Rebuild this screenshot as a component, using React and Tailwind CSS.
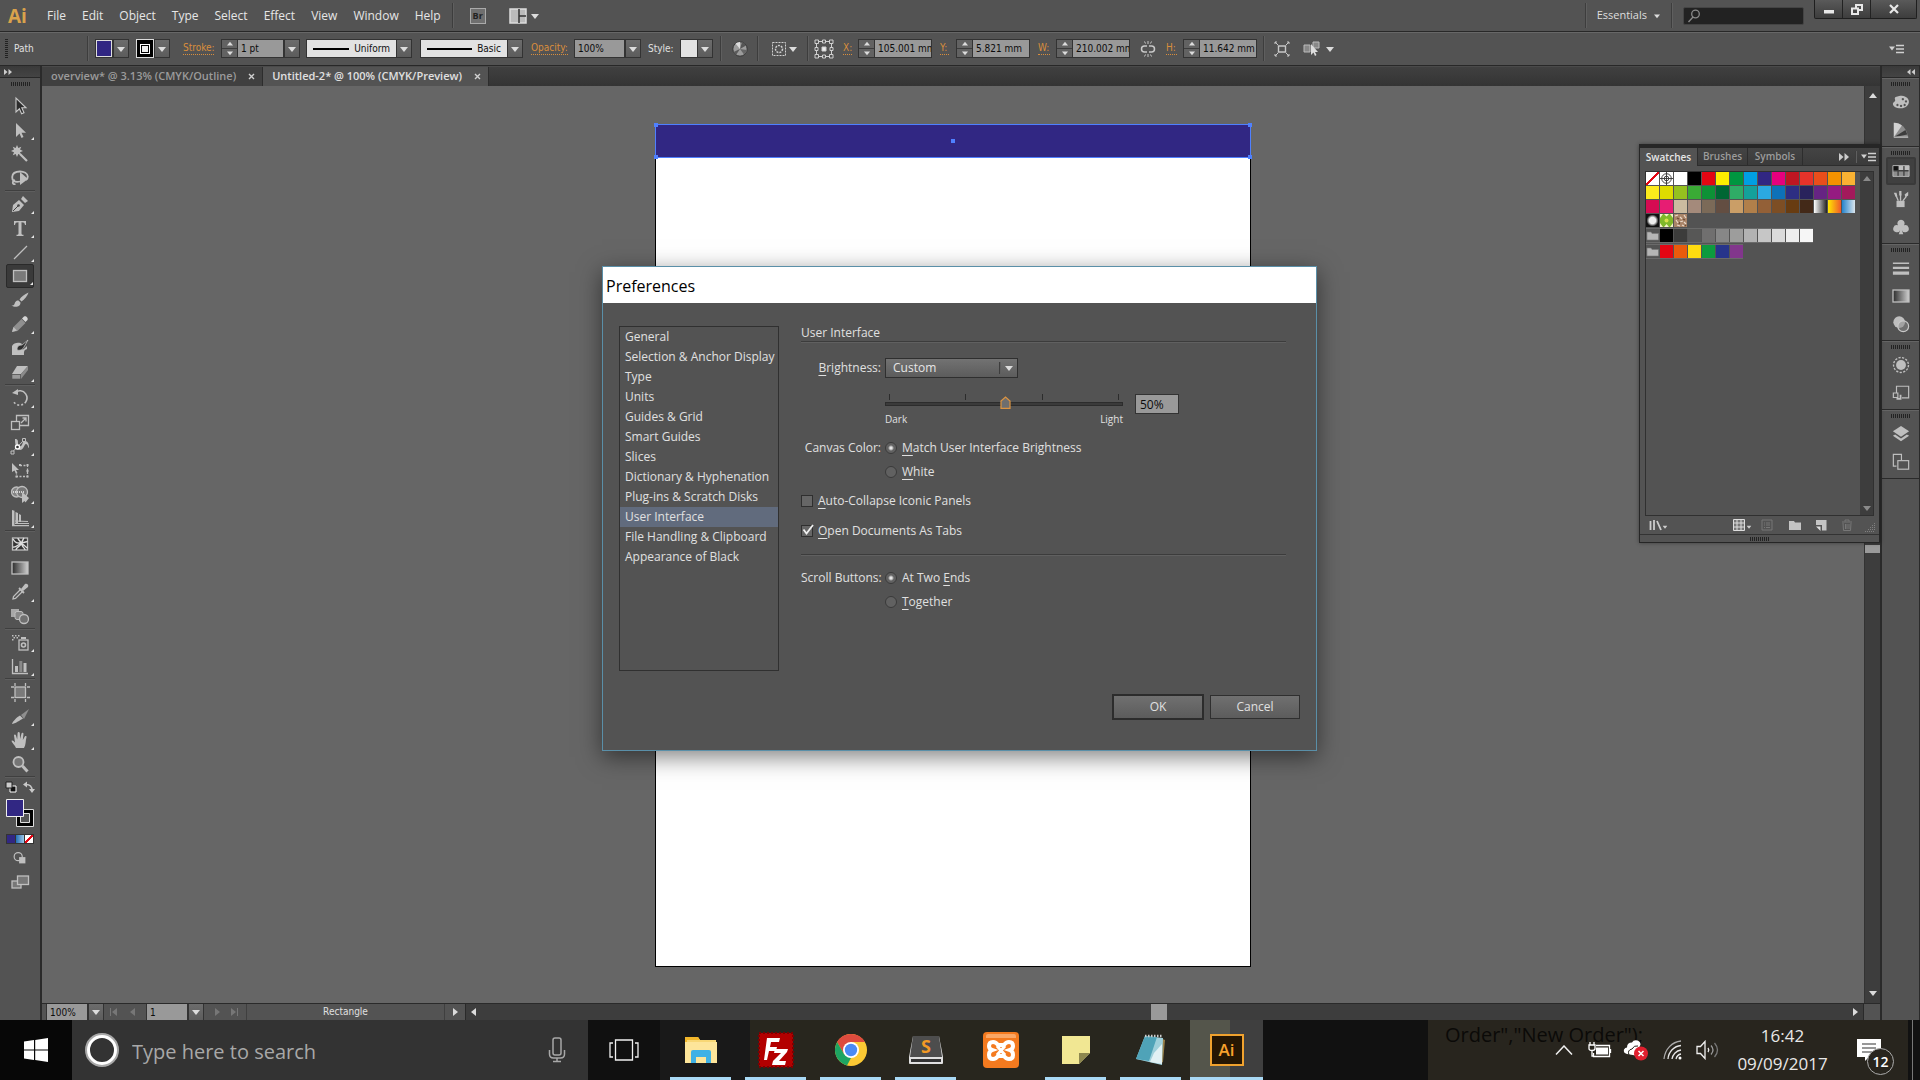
import { useState } from 'react';
import clsx from 'clsx';

const menus = ['File', 'Edit', 'Object', 'Type', 'Select', 'Effect', 'View', 'Window', 'Help'];

const sections = [
    'General', 'Selection & Anchor Display', 'Type', 'Units', 'Guides & Grid', 'Smart Guides', 'Slices',
    'Dictionary & Hyphenation', 'Plug-ins & Scratch Disks', 'User Interface', 'File Handling & Clipboard',
    'Appearance of Black',
];

const swatchRows = [
    ['none', 'registration', '#ffffff', '#000000', '#e30613', '#ffed00', '#009640', '#009fe3', '#312783', '#e6007e', '#be1622', '#e6332a', '#e94e1b', '#f39200', '#f9b233'],
    ['#fcea1c', '#dedc00', '#95c11f', '#3aaa35', '#0d9136', '#006633', '#2fac66', '#14a19a', '#2ba9e1', '#0d71b8', '#2d2e83', '#29235c', '#662483', '#951b81', '#a3195b'],
    ['#d60b52', '#e71d73', '#cbbba0', '#a48a7b', '#7b6a58', '#634e42', '#ca9e67', '#b17f4a', '#936037', '#7d4e24', '#683c11', '#432918',
        'linear-gradient(90deg,#fff,#222)', 'linear-gradient(90deg,#ffe600,#f0582a)', 'linear-gradient(90deg,#2583cc,#dbe6ee)'],
    ['dots', 'leaves', 'sand'],
];

const grays = ['#000000', '#3c3c3b', '#575756', '#706f6f', '#878787', '#9d9d9c', '#b2b2b2', '#c6c6c6', '#dadada', '#ededed', '#f6f6f6'];
const brights = ['#e30613', '#ea5b0c', '#ffdc0f', '#0d9b3e', '#27348b', '#82368c'];

/* ---------- small shared pieces ---------- */

function Arrow({ dir = 'down', className = 'text-[#dcdcdc]' }) {
    const d = { down: 'M0 2h8l-4 5z', up: 'M0 6h8l-4-5z', left: 'M6 0v8l-5-4z', right: 'M2 0v8l5-4z' }[dir];
    return <svg viewBox="0 0 8 8" className={clsx('h-2 w-2 shrink-0', className)}><path d={d} fill="currentColor" /></svg>;
}

function DropButton({ label }) {
    return (
        <button aria-label={label} className="flex h-[19px] w-4 shrink-0 items-center justify-center border border-[#333] bg-linear-to-b from-[#6c6c6c] to-[#5c5c5c]">
            <Arrow />
        </button>
    );
}

function Spinner({ label }) {
    return (
        <span className="flex h-[19px] w-4 shrink-0 flex-col border border-r-0 border-[#333] bg-[#626262]">
            <button aria-label={label + ' up'} className="flex flex-1 items-center justify-center border-b border-[#3c3c3c]"><Arrow dir="up" className="scale-75 text-[#dcdcdc]" /></button>
            <button aria-label={label + ' down'} className="flex flex-1 items-center justify-center"><Arrow className="scale-75 text-[#dcdcdc]" /></button>
        </span>
    );
}

function Field({ label, value, className }) {
    return <input aria-label={label} defaultValue={value} className={clsx('h-[19px] shrink-0 border border-[#333] bg-[#999] pl-[3px] text-[10px] text-[#0c0c0c]', className)} />;
}

function Link({ children, className }) {
    return <a href="#" className={clsx('shrink-0 border-b border-dotted border-[#d98e3c] leading-3 text-[#d98e3c]', className)}>{children}</a>;
}

function Sep({ className, size = 'h-[25px]' }) {
    return <span className={clsx('w-[2px] shrink-0 border-r border-l border-r-[#5f5f5f] border-l-[#3d3d3d]', size, className)} />;
}

function Grip() {
    return <div className="mx-auto h-1 w-[19px] bg-[repeating-linear-gradient(90deg,#222_0_1px,#535353_1px_2px)]" />;
}

/* ---------- icons, all on a 20 x 20 grid ---------- */

function Icon({ children, className = 'h-5 w-5' }) {
    return <svg viewBox="0 0 20 20" fill="none" stroke="#bfbfbf" strokeWidth="1.3" className={clsx('shrink-0', className)}>{children}</svg>;
}

const F = { fill: '#bfbfbf', stroke: 'none' };

const icons = {
    selection: <path d="M6 2v14l3.4-3.2 2.2 5 2.4-1-2.2-5H16z" fill="#2c2c2c" stroke="#c9c9c9" strokeWidth="1.1" />,
    direct: <path d="M6 3v14l3.5-3.4 2 4.4 2-1-2-4.2H16z" {...F} />,
    wand: <><path d="M7 1l1.3 3 3-1.3L10 5.6l3 1.4-3 1.3 1.3 2.9-3-1.2L7 13l-1.3-3-2.9 1.2L4 8.3 1 7l3-1.4-1.2-2.9 2.9 1.3z" {...F} /><path d="M10 10l7 7" strokeWidth="2.2" /></>,
    lasso: <><path d="M10 13.5C4 15 2 12 2.2 9 2.5 5 6 3.500 10 3.500s7.500 2 7.800 5c.1 2-1 3-2 3.500M5 12c-3 1-3 5 .5 4" strokeWidth="1.800" /><path d="M10 4v13l8-6z" {...F} /></>,
    pen: <><path d="M2 18l1-7 6-5 5 5-5 6z" {...F} /><path d="M11 5l2-3 5 5-3 2z" {...F} /><path d="M3 17l5-5" stroke="#444" strokeWidth="1" /><circle cx="8.500" cy="11.500" r="1.300" fill="#444" stroke="none" /></>,
    type: <path d="M4 3h12v4h-1c-.3-2-1-2.7-3.5-2.7v11c0 1.200.5 1.400 2 1.500V18h-7v-1.200c1.500-.1 2-.3 2-1.500v-11C6 4.300 5.300 5 5 7H4z" {...F} />,
    line: <path d="M4 17L17 4" />,
    rect: <rect x="3.500" y="4.500" width="13" height="11" fill="#7a7a7a" />,
    brush: <><path d="M18.500 2.500c-4 1.500-7.500 4.500-9 7l2 2c3-2 6-5.500 7-9z" {...F} /><path d="M8.500 10.500c-3 0-3.500 2-4 3.500-.5 1-1.500 1.500-3 1.500 3 2 9 2 9-3z" {...F} /></>,
    pencil: <><path d="M2 18l1.500-5 8-8 4 4-8 8z" fill="#8f8f8f" stroke="none" /><path d="M2 18l1.500-5 3.500 3.500z" {...F} /><path d="M12 4.500l2-2c2-1 4.500 1.500 3.500 3.500l-2 2z" fill="#d6d6d6" stroke="none" /></>,
    blob: <><path d="M2 8c2-4 8-4 10-2l-3 4c2 2 4 2 6 0l2-2v3c-3 1-3 2-3 6H2z" {...F} /><path d="M18 2l-6 5c-3 0-5 1-5 5 4 1 6-1 7-3z" fill="#2f2f2f" stroke="#bfbfbf" strokeWidth=".8" /></>,
    eraser: <><path d="M7 4h11l-7 8H2z" {...F} /><path d="M2 12.500h8.500V17H2z" fill="#9a9a9a" stroke="#555" strokeWidth=".6" /><path d="M11 12l7-8v4l-7 9z" fill="#8a8a8a" stroke="none" /></>,
    rotate: <><path d="M5 4.500a7.200 7.200 0 1 1-2 8" strokeDasharray="20 0 2 2 2 2 2 2 2 2" strokeWidth="1.600" /><path d="M2 5l6-4v6z" {...F} /></>,
    scale: <><rect x="1.500" y="9.500" width="8" height="8" /><path d="M6.500 9V3.500h12v10h-9" /><path d="M11 11l5-5M12.500 6H16v3.500" /></>,
    width: <><path d="M5 3c3 0 3 2 3 4s1 4 3 3 1-5 4-5c3 0 4 3 4 7-1 0-1-4-3-4s-2 6-6 6c-5 0-5-9-5-11z" {...F} /><path d="M2.500 16L14 4" strokeWidth="1" /><path d="M1 15h3v3H1zM12.500 2.500h3v3h-3z" fill="#535353" strokeWidth="1" /><circle cx="7.500" cy="11" r="2" fill="#333" stroke="#fff" /></>,
    transform: <><path d="M2 3v9l2.500-1.500L6 14l1.500-1-1.500-3H9z" {...F} /><path d="M10 5.500h7.500v11H6.500V14" strokeDasharray="2 1.500" /><path d="M9 4h2v2H9zM16.500 4h2v2h-2zM16.500 15.500h2v2h-2zM5.500 15.500h2v2h-2zM16.500 10h2v2h-2z" {...F} /></>,
    builder: <><circle cx="6.500" cy="8" r="5" fill="#858585" /><circle cx="12" cy="8" r="5.500" fill="#777" /><path d="M3 8h11" stroke="#eee" strokeDasharray="1 1" /><path d="M12 8v11l2.500-2 1 1.500L19 14z" {...F} /></>,
    perspective: <><path d="M2 2l2.500.7V17H2zM5.500 4l2.500 1v10H5.500zM9 6l2 1v7H9z" {...F} /><path d="M5 13l13 .5M5 15.500h14M2 17.600h17" strokeWidth="1.200" /></>,
    mesh: <><rect x="2.500" y="4" width="15" height="12" fill="#333" /><path d="M3 5c3 5 5 4 8 4s5-2 6.500-1M3 13c4 1 5-4 9-3 3 1 3 3 5.500 4M8 4c0 3 4 3 3 6s-5 3-5 6M14 4c-2 3-3 4-2 7s3 3 3 5" stroke="#ddd" strokeWidth="1.400" /></>,
    eyedropper: <><path d="M11 7l4-5c2-1 4 1 3 3l-5 4z" {...F} /><path d="M9 6l5 5" strokeWidth="1.800" /><path d="M10.500 7.500L3.500 14.500 3 17l2.500-.5 7-7" /></>,
    blend: <><rect x="1" y="3" width="8" height="8" fill="#a8a8a8" stroke="none" /><rect x="5" y="5.500" width="8" height="8" rx="2" fill="#888" strokeWidth="1" /><circle cx="14" cy="13" r="4.500" fill="#6f6f6f" /></>,
    spray: <><rect x="9" y="8" width="9" height="10" fill="#555" /><circle cx="13.500" cy="13" r="2" strokeWidth="1.600" /><path d="M11 5h5v2h-5zM2 3h1.500v1.500H2zM5 3h1.500v1.500H5zM8 3h1.500v1.500H8zM3.500 5H5v1.500H3.500zM6.500 5H8v1.500H6.500zM2 7h1.500v1.500H2z" {...F} /></>,
    graph: <><path d="M2.500 3v14.500H18" /><path d="M5 10h3v6H5zM13.500 7h3v9h-3z" {...F} /><path d="M9.300 5h3v11h-3z" fill="#8a8a8a" stroke="none" /></>,
    artboard: <><rect x="5" y="5" width="10.500" height="10.500" fill="#7a7a7a" /><path d="M5 1v3M1 5h3M15.500 1v3M17 5h3M5 17v3M1 15.500h3M15.500 17v3M17 15.500h3" /></>,
    slice: <><path d="M11 9l8-6-5 10z" fill="#8f8f8f" stroke="none" /><path d="M2 18c1-3 5-7 8-8.500l3 3C10 14 5 18 2 18z" {...F} /></>,
    hand: <path d="M6 18c-1-3-4-5-4.500-7 1-1 2 0 3.500 1.500L4 5.500c0-1.500 1.600-1.500 2 0l1.200 4L7.600 3c.2-1.500 2-1.500 2.200 0l.3 6 1.400-5.500c.5-1.300 2-1 2 .3l-.7 6.200 2-3.500c.8-1 2-.4 1.700.8C15.500 10.500 16 15 14 18z" {...F} />,
    zoom: <><circle cx="8.500" cy="8" r="5" fill="#757575" strokeWidth="1.800" /><path d="M12.500 12l5 5.500" strokeWidth="3" /></>,
    screens: <><rect x="2" y="9" width="9" height="7" fill="#777" /><rect x="7.500" y="4" width="11" height="8.500" fill="#777" /></>,
    drawMode: <><circle cx="8" cy="8.500" r="4.500" /><rect x="9" y="9" width="7" height="7" {...F} /></>,
    palette: <path fillRule="evenodd" d="M9 3c5 0 10 2 9.800 7-.3 4-4 7-9 7C4 17 1 15 1 12c0-2 2-2 2.500-3.500C4 7 2 6 4 4.500zM12 5.500a1.300 1.300 0 1 0 .1 0zM15.500 8a1.300 1.300 0 1 0 .1 0zM14 12a1.300 1.300 0 1 0 .1 0zM10 13a1.300 1.300 0 1 0 .1 0zM6 12a1.300 1.300 0 1 0 .1 0z" {...F} />,
    guide: <><path d="M2 18V2c9 0 14 6 16 16z" fill="#8b8b8b" stroke="none" /><path d="M2 18V2c4 0 7 1.500 9 3z" fill="#d2d2d2" stroke="none" /><path d="M2 18l13-8 2 5z" fill="#3c3c3c" stroke="none" /><path d="M2 18h16" /></>,
    grid: <><path d="M1 4h5.500v5H1z" fill="#111" stroke="none" /><path d="M1 10.500h5v5H1zM7.500 10.500h5v5h-5zM14 10.500h5v5h-5z" fill="#8d8d8d" stroke="none" /><path d="M14 4.500h5v4.500h-5zM7.500 4.500h5v4.500h-5z" {...F} /><path d="M1 4h18v12H1z" strokeWidth="1" /></>,
    brushes: <><path d="M5 12h9v7H5z" {...F} /><path d="M7 12L4 5M9.500 12V4M12 12l4-5" strokeWidth="1.500" /><path d="M2 3l3 0 1 4-2 .5zM8 1h2.500v5H8zM14 5l4-3v4l-3 2z" {...F} /></>,
    club: <path d="M10 2a4 4 0 0 1 3.500 6A4 4 0 1 1 11 13.500l1.500 4.500h-5L9 13.500A4 4 0 1 1 6.500 8 4 4 0 0 1 10 2z" {...F} />,
    strokes: <path d="M1 4h18v1.500H1zM1 8.500h18V11H1zM1 14h18v3.500H1z" {...F} />,
    transparency: <><circle cx="8" cy="8" r="6.500" {...F} /><circle cx="12.500" cy="12.500" r="6" fill="#8a8a8a88" stroke="#c9c9c9" /></>,
    appearance: <><circle cx="10" cy="10" r="5.500" {...F} /><circle cx="10" cy="10" r="8.300" strokeDasharray="2.500 1.500" strokeWidth="1.500" /></>,
    styles: <><path d="M5 10V2.500h13.500v13H11" /><path d="M1.500 10h5v5h-5z" /><path d="M5 16.500h4.500V12" strokeWidth="2" /></>,
    layers: <><path d="M10 1l9 6-9 6-9-6z" {...F} /><path d="M3.500 10.500L10 15l6.500-4.500L19 12l-9 6-9-6z" {...F} /></>,
    boards: <><path d="M5 14.500H1.500v-13h9V8" /><rect x="6.500" y="8.500" width="12" height="9.500" /></>,
};

function GradientIcon({ id }) {
    return (
        <Icon>
            <defs><linearGradient id={id}><stop stopColor="#2b2b2b" /><stop offset="1" stopColor="#cfcfcf" /></linearGradient></defs>
            <rect x="2" y="4" width="16" height="12" fill={`url(#${id})`} />
        </Icon>
    );
}

/* ---------- top bars ---------- */

function MenuBar() {
    return (
        <header className="flex h-8 items-start border-b border-[#282828] bg-[#535353]">
            <div className="flex h-[31px] items-center">
                <span className="w-[47px] pl-2 text-[19px] leading-6 font-bold text-[#d9a24c]">Ai</span>
                <nav className="flex gap-4 text-[12px] text-[#e6e6e6]">
                    {menus.map(m => <button key={m}>{m}</button>)}
                </nav>
                <Sep className="ml-[11px]" />
                <button className="ml-4 flex h-4 w-4 items-center justify-center border border-[#aaa] bg-[#6f6f6f] text-[9px] font-bold text-[#222]">Br</button>
                <button aria-label="Arrange documents" className="ml-[23px] flex items-center gap-1">
                    <svg viewBox="0 0 18 16" className="h-4 w-[18px]"><path d="M1 1h16v14H1z" fill="#bbb" stroke="#ddd" strokeWidth="1.500" /><path d="M10 1v14M10 8h7" stroke="#333" strokeWidth="1.500" /></svg>
                    <Arrow />
                </button>
            </div>
            <div className="ml-auto flex h-[31px] items-center">
                <Sep />
                <button className="ml-[10px] flex items-center gap-1.5 text-[11px] text-[#dedede]">Essentials <Arrow className="scale-75 text-[#dcdcdc]" /></button>
                <Sep className="mx-[10px]" />
                <label className="flex h-[18px] w-[121px] items-center rounded-xs border border-[#444] bg-[#222] px-[3px]">
                    <svg viewBox="0 0 14 14" className="h-3.5 w-3.5 shrink-0" fill="none" stroke="#8a8a8a" strokeWidth="1.300"><circle cx="8.500" cy="5" r="3.800" /><path d="M6 8l-4.500 5" /></svg>
                    <input aria-label="Search for help" className="w-full min-w-0 bg-transparent text-[11px] text-white outline-none" />
                </label>
            </div>
            <div className="mr-[3px] ml-[10px] flex h-[19px] overflow-hidden rounded-b-xs border border-t-0 border-[#1f1f1f] bg-linear-to-b from-[#5a5a5a] to-[#3d3d3d]">
                <button aria-label="Minimize" className="flex w-7 items-center justify-center border-r border-[#222]"><svg viewBox="0 0 10 10" className="h-2.5 w-2.5"><path d="M0 6h10v3.500H0z" fill="#e8e8e8" /></svg></button>
                <button aria-label="Restore" className="flex w-7 items-center justify-center border-r border-[#222]"><svg viewBox="0 0 12 12" className="h-3 w-3" fill="none" stroke="#e8e8e8" strokeWidth="2"><path d="M5 5V2h6v5H8" /><path d="M1 5.500h6V11H1z" /></svg></button>
                <button aria-label="Close" className="flex w-[45px] items-center justify-center"><svg viewBox="0 0 10 10" className="h-2.5 w-2.5"><path d="M1 1l8 8M9 1L1 9" stroke="#e8e8e8" strokeWidth="2.200" /></svg></button>
            </div>
        </header>
    );
}

function LineField({ name, className }) {
    return (
        <>
            <button className={clsx('flex h-[19px] shrink-0 items-center gap-[5px] border border-r-0 border-[#333] bg-[#e2e2e2] px-1.5 text-[10px] text-[#111]', className)}>
                <span className="h-0.5 flex-1 bg-black" />
                {name}
            </button>
            <DropButton label={name} />
        </>
    );
}

function ControlBar() {
    return (
        <div className="flex h-[34px] items-center border-t border-b border-t-[#676767] border-b-[#282828] bg-[#535353] pb-px font-['DejaVu_Sans_Condensed','Open_Sans',sans-serif] text-[10px] text-[#e0e0e0]">
            <div className="ml-[5px] h-[19px] w-[3px] bg-[repeating-linear-gradient(180deg,#222_0_1px,#535353_1px_2px)]" />
            <span className="ml-1.5 w-[73px]">Path</span>
            <Sep />
            <button aria-label="Fill" className="ml-[6px] h-[19px] w-[18px] border border-[#333] bg-[#312783] ring-1 ring-[#ddd] ring-inset" />
            <DropButton label="Fill options" />
            <button aria-label="Stroke color" className="ml-[7px] flex h-[19px] w-[18px] items-center justify-center border border-[#ddd] bg-black"><span className="flex h-2.5 w-2.5 border border-white p-px"><span className="flex-1 bg-[#eee]" /></span></button>
            <DropButton label="Stroke options" />
            <Link className="mr-[7px] ml-[13px] w-[31px] whitespace-nowrap">Stroke:</Link>
            <Spinner label="Stroke weight" />
            <Field label="Stroke weight" value="1 pt" className="w-[47px]" />
            <DropButton label="Stroke weight presets" />
            <span className="w-[6px] shrink-0" />
            <LineField name="Uniform" className="w-[90px]" />
            <span className="w-2 shrink-0" />
            <LineField name="Basic" className="w-[87px]" />
            <Link className="mr-[6px] ml-2 w-[37px] whitespace-nowrap">Opacity:</Link>
            <Field label="Opacity" value="100%" className="w-[51px]" />
            <DropButton label="Opacity presets" />
            <span className="ml-[7px] w-8 whitespace-nowrap">Style:</span>
            <span className="h-[19px] w-[17px] border border-r-0 border-[#333] bg-[#e2e2e2]" />
            <DropButton label="Graphic styles" />
            <Sep className="ml-[7px]" />
            <button aria-label="Recolor artwork" className="ml-[10px]">
                <svg viewBox="0 0 16 16" className="h-4 w-4"><circle cx="8" cy="8" r="7.200" fill="#9c9c9c" stroke="#383838" /><path d="M8 8L3.500 2.500A7 7 0 0 1 8 1z" fill="#ddd" /><path d="M8 8l2-7a7 7 0 0 1 4 3.500z" fill="#555" /><path d="M8 8l7 1a7 7 0 0 1-3 4.500z" fill="#666" /><path d="M8 8l-4 6a7 7 0 0 1-2.500-3z" fill="#5a5a5a" /></svg>
            </button>
            <Sep className="ml-[9px]" />
            <button aria-label="Align" className="ml-3 flex items-center gap-0.5">
                <svg viewBox="0 0 16 16" className="h-4 w-4" fill="none" stroke="#d0d0d0"><path d="M1.500 1.500h13v13h-13z" strokeDasharray="2 1" /><circle cx="8" cy="8" r="3.500" strokeDasharray="2 1" strokeWidth="1.500" /></svg>
                <Arrow />
            </button>
            <Sep className="ml-[10px]" />
            <svg viewBox="0 0 20 20" className="ml-[5px] h-5 w-5 shrink-0" fill="none" stroke="#cfcfcf"><path d="M2.500 2.500h15v15h-15z" /><path d="M1 1h3.500v3.500H1zM8.500 1h3v3h-3zM15.500 1H19v3.500h-3.500zM1 8.500h3v3H1zM16 8.500h3v3h-3zM1 15.500h3.500V19H1zM8.500 16h3v3h-3zM15.500 15.500H19V19h-3.500z" fill="#535353" /><path d="M8 8h4v4H8z" fill="#eee" /></svg>
            <Link className="mr-[6px] ml-[9px] w-[9px]">X:</Link>
            <Spinner label="X" />
            <Field label="X" value="105.001 mm" className="w-[58px]" />
            <Link className="mr-[7px] ml-[8px] w-[9px]">Y:</Link>
            <Spinner label="Y" />
            <Field label="Y" value="5.821 mm" className="w-[58px]" />
            <Link className="mr-[6px] ml-[8px] w-[12px] whitespace-nowrap">W:</Link>
            <Spinner label="W" />
            <Field label="W" value="210.002 mm" className="w-[58px]" />
            <button aria-label="Constrain proportions" className="mx-[10px]">
                <svg viewBox="0 0 16 18" className="h-[18px] w-4" fill="none" stroke="#c8c8c8" strokeWidth="1.500"><path d="M7 6H4.500a3 3 0 0 0 0 6H7M9 6h2.500a3 3 0 0 1 0 6H9" /><path d="M8 1v3M4.500 1.500l1 2M11.500 1.500l-1 2M8 14v3M4.500 16.500l1-2M11.500 16.500l-1-2" strokeWidth="1" /></svg>
            </button>
            <Link className="mr-[6px] w-[11px]">H:</Link>
            <Spinner label="H" />
            <Field label="H" value="11.642 mm" className="w-[58px]" />
            <Sep className="ml-[6px]" />
            <button aria-label="Isolate" className="ml-[9px]">
                <svg viewBox="0 0 16 16" className="h-4 w-4" fill="none" stroke="#c8c8c8"><path d="M4.500 5h7v6h-7z" strokeWidth="1.400" /><path d="M1 1l3 3M15 1l-3 3M1 15l3-3M15 15l-3-3M1 3V1h2M13 1h2v2M1 13v2h2M13 15h2v-2" /></svg>
            </button>
            <button aria-label="Select similar" className="ml-[13px] flex items-center gap-[5px]">
                <svg viewBox="0 0 18 16" className="h-4 w-[18px]"><path d="M1 4h6v7H1zM10 1h6v6h-6z" fill="#888" stroke="#bbb" /><path d="M8 3v11l2.500-2.500L12 15l1.500-1-1.500-3h3z" fill="#ddd" /></svg>
                <Arrow />
            </button>
            <button aria-label="Control panel menu" className="mr-4 ml-auto"><PanelMenuIcon /></button>
        </div>
    );
}

function PanelMenuIcon() {
    return <svg viewBox="0 0 15 10" className="h-2.5 w-[15px]"><path d="M0 2.500h6l-3 4z" fill="#d0d0d0" /><path d="M7 1.500h8M7 5h8M7 8.500h8" stroke="#d0d0d0" strokeWidth="1.300" /></svg>;
}

/* ---------- left tool bar ---------- */

const toolGroups = [
    [['selection'], ['direct', 1], ['wand'], ['lasso']],
    [['pen', 1], ['type', 1], ['line', 1], ['rect', 1], ['brush'], ['pencil', 1], ['blob'], ['eraser', 1]],
    [['rotate', 1], ['scale', 1], ['width', 1], ['transform'], ['builder', 1], ['perspective', 1]],
    [['mesh'], ['gradient'], ['eyedropper', 1], ['blend']],
    [['spray', 1], ['graph', 1]],
    [['artboard'], ['slice', 1], ['hand', 1], ['zoom']],
];

function DockHeader({ flip }) {
    return (
        <div className={clsx('flex h-3 items-center border-b border-[#282828] bg-linear-to-b from-[#3a3a3a] to-[#444] px-1', flip && 'justify-end')}>
            <svg viewBox="0 0 8 6" className={clsx('h-1.5 w-2', flip && 'rotate-180')}><path d="M0 0l3.500 3L0 6zM4.500 0L8 3 4.500 6z" fill="#ccc" /></svg>
        </div>
    );
}

function ToolBar() {
    const [active, setActive] = useState('rect');
    return (
        <aside className="w-[42px] shrink-0 border-r-2 border-[#2a2a2a] bg-[#535353]">
            <DockHeader />
            <div className="h-4 pt-1"><Grip /></div>
            {toolGroups.map((group, i) => (
                <div key={i}>
                    {group.map(([name, more]) => (
                        <button
                            key={name}
                            aria-label={name}
                            onClick={() => setActive(name)}
                            className={clsx('relative mx-auto flex h-6 w-7 items-center justify-center', active === name && 'rounded-xs border border-[#2a2a2a] bg-[#3a3a3a]')}>
                            {name === 'gradient' ? <GradientIcon id="tool-gradient" /> : <Icon>{icons[name]}</Icon>}
                            {more && <svg viewBox="0 0 3 3" className="absolute right-0 bottom-0.5 h-[3px] w-[3px]"><path d="M3 0v3H0z" fill="#e6e6e6" /></svg>}
                        </button>
                    ))}
                    <div className="mx-[5px] h-0.5 border-t border-b border-t-[#3f3f3f] border-b-[#5e5e5e]" />
                </div>
            ))}
            <div className="flex h-[18px] items-center justify-between px-[5px]">
                <button aria-label="Default fill and stroke"><svg viewBox="0 0 12 12" className="h-3 w-3"><path d="M5 5h6v6H5z" stroke="#fff" strokeWidth="1" fill="#111" /><path d="M1 1h6v6H1z" fill="#ccc" stroke="#222" strokeWidth="1" /></svg></button>
                <button aria-label="Swap fill and stroke"><svg viewBox="0 0 12 12" className="h-3 w-3" fill="none" stroke="#c8c8c8" strokeWidth="1.500"><path d="M3 3.500c4 0 6 1.500 6 6" /><path d="M0 3.500L4 .5v6zM6 8h6L9 12z" fill="#c8c8c8" stroke="none" /></svg></button>
            </div>
            <button aria-label="Fill and stroke" className="mx-auto mt-0.5 block h-[30px] w-7">
                <svg viewBox="0 0 28 30" className="h-[30px] w-7"><path d="M10.500 11.500h17v17h-17z" fill="#000" stroke="#ddd" /><path d="M14.500 15.500h9v9h-9z" fill="#535353" stroke="#ddd" /><path d="M.5 1.500h17v17H.5z" fill="#312783" stroke="#eee" /></svg>
            </button>
            <div className="mx-auto mt-1.5 flex h-[10px] w-7 gap-px border border-[#333] bg-[#333]">
                <button aria-label="Color" className="flex-1 bg-[#312783]" />
                <button aria-label="Gradient" className="flex-1 bg-linear-to-r from-[#1f6fb5] to-[#9cc8e8]" />
                <button aria-label="None" className="flex-1 bg-[linear-gradient(135deg,#fff_40%,#e30613_40%_60%,#fff_60%)]" />
            </div>
            <button aria-label="Drawing mode" className="mx-auto mt-0.5 flex h-6 w-7 items-center justify-center"><Icon className="h-[18px] w-[18px]">{icons.drawMode}</Icon></button>
            <button aria-label="Screen mode" className="mx-auto flex h-6 w-7 items-center justify-center"><Icon>{icons.screens}</Icon></button>
        </aside>
    );
}

/* ---------- right icon dock ---------- */

const dockGroups = [['palette', 'guide'], ['grid', 'brushes', 'club'], ['strokes', 'gradient', 'transparency'], ['appearance', 'styles'], ['layers', 'boards']];

function Dock() {
    return (
        <aside className="w-10 shrink-0 border-r border-l-2 border-[#2a2a2a] bg-[#535353]">
            <DockHeader flip />
            {dockGroups.map((group, i) => (
                <div key={i} className="border-t border-b border-t-[#646464] border-b-[#2a2a2a] pt-[3px] pb-0.5">
                    <Grip />
                    <div className="mt-0.5">
                        {group.map(name => (
                            <button key={name} aria-label={name} className={clsx('mx-auto flex h-7 w-[30px] items-center justify-center', name === 'grid' && 'rounded-xs border-2 border-[#3a3a3a] bg-[#404040]')}>
                                {name === 'gradient' ? <GradientIcon id="dock-gradient" /> : <Icon className="h-[18px] w-[18px]">{icons[name]}</Icon>}
                            </button>
                        ))}
                    </div>
                </div>
            ))}
        </aside>
    );
}

/* ---------- document area ---------- */

function DocTab({ title, active }) {
    return (
        <div className={clsx('flex items-center border-r border-[#2d2d2d] pr-[7px] pl-[9px]', active ? 'bg-[#535353] text-[#e0e0e0]' : 'bg-[#404040] text-[#9b9b9b]')}>
            <button className="pr-3 text-[11px] font-semibold whitespace-nowrap">{title}</button>
            <button aria-label={'Close ' + title}><svg viewBox="0 0 7 7" className="h-[7px] w-[7px]"><path d="M1 1l5 5M6 1L1 6" stroke="#d0d0d0" strokeWidth="1.400" /></svg></button>
        </div>
    );
}

function Handle({ className }) {
    return <span className={clsx('absolute h-1 w-1 bg-[#4f80ff]', className)} />;
}

function StatusBar() {
    return (
        <div className="flex h-[17px] border-t border-[#2a2a2a] bg-[#535353] font-['DejaVu_Sans_Condensed','Open_Sans',sans-serif] text-[10px] text-[#e0e0e0]">
            <div className="flex h-4 w-[423px] shrink-0 items-center overflow-hidden pl-1">
                <Field label="Zoom" value="100%" className="w-[42px]" />
                <DropButton label="Zoom presets" />
                <button aria-label="First artboard" className="ml-[6px] flex"><span className="h-2 w-px bg-[#777]" /><Arrow dir="left" className="text-[#777]" /></button>
                <button aria-label="Previous artboard" className="mr-[9px] ml-[10px]"><Arrow dir="left" className="text-[#777]" /></button>
                <Field label="Artboard" value="1" className="w-[42px]" />
                <DropButton label="Artboards" />
                <button aria-label="Next artboard" className="ml-[9px]"><Arrow dir="right" className="text-[#777]" /></button>
                <button aria-label="Last artboard" className="ml-[8px] flex"><Arrow dir="right" className="text-[#777]" /><span className="h-2 w-px bg-[#777]" /></button>
                <span className="ml-[8px] flex-1 border-r border-l border-[#3f3f3f] text-center leading-4">Rectangle</span>
                <button aria-label="Status options" className="flex w-5 justify-center"><Arrow dir="right" /></button>
            </div>
            <div className="flex flex-1 items-center justify-between border-r border-l border-[#2a2a2a] bg-[#3d3d3d] px-1">
                <Arrow dir="left" />
                <div className="relative h-full flex-1"><span className="absolute left-[49%] h-full w-4 bg-[#9a9a9a]" /></div>
                <Arrow dir="right" />
            </div>
            <span className="w-4" />
        </div>
    );
}

function DocumentArea() {
    return (
        <main className="flex min-w-0 flex-1 flex-col">
            <div className="flex h-5 border-t border-t-[#4a4a4a] bg-linear-to-b from-[#404040] to-[#343434]">
                <DocTab title="overview* @ 3.13% (CMYK/Outline)" />
                <DocTab title="Untitled-2* @ 100% (CMYK/Preview)" active />
            </div>
            <div className="flex flex-1">
                <div className="flex flex-1 items-center justify-center bg-[#666] pt-0.5">
                    <div className="relative h-[843px] w-[596px] border border-black bg-white">
                        {/* selected rectangle at the top of the artboard */}
                        <div className="absolute -inset-x-px -top-px h-[34px] border border-[#4f80ff] bg-[#312783]">
                            <Handle className="-top-[2px] -left-[2px]" />
                            <Handle className="-top-[2px] -right-[2px]" />
                            <Handle className="-bottom-[2px] -left-[2px]" />
                            <Handle className="-right-[2px] -bottom-[2px]" />
                            <Handle className="top-[14px] left-[295px]" />
                        </div>
                    </div>
                </div>
                <div className="flex w-4 flex-col items-center justify-between border-l border-[#333] bg-[#3d3d3d] py-1.5">
                    <Arrow dir="up" />
                    <div className="relative w-full flex-1"><span className="absolute top-[50%] h-2 w-full bg-[#9a9a9a]" /></div>
                    <Arrow />
                </div>
            </div>
            <StatusBar />
        </main>
    );
}

/* ---------- swatches panel ---------- */

function Swatch({ value }) {
    const base = 'h-[13px] w-[13px]';
    if (value === 'none') return <button aria-label="None" className={clsx(base, 'bg-[linear-gradient(135deg,#fff_44%,#e30613_44%_56%,#fff_56%)]')} />;
    if (value === 'registration') {
        return (
            <button aria-label="Registration" className={clsx(base, 'bg-white')}>
                <svg viewBox="0 0 13 13" fill="none" stroke="#333" strokeWidth=".9" className={base}><circle cx="6.500" cy="6.500" r="4.800" /><circle cx="6.500" cy="6.500" r="2.300" /><path d="M6.500 0v13M0 6.500h13" /></svg>
            </button>
        );
    }
    if (value === 'dots') return <button aria-label="Dots" className={clsx(base, 'bg-[radial-gradient(circle,#eee_35%,#111_65%)]')} />;
    if (value === 'leaves') {
        return (
            <button aria-label="Leaves" className={clsx(base, 'bg-[#7fb82a]')}>
                <svg viewBox="0 0 13 13" className={base}><path d="M0 0h3L0 4zM13 0v4l-3-4zM4 0h5L6.500 2.500zM4 13h5l-2.500-3zM0 13V9l3 4zM13 13h-3l3-4z" fill="#f4f4c8" /><circle cx="6.500" cy="6.500" r="2" fill="#d8e04a" /></svg>
            </button>
        );
    }
    if (value === 'sand') {
        return (
            <button aria-label="Sand" className={clsx(base, 'bg-[#a98468]')}>
                <svg viewBox="0 0 13 13" className={base}><path d="M1 2l3-1M6 3l2 2M10 1l2 3M2 6l2 3M6 8l3-1M10 8l2 2M3 11l3 1M8 11l2 1" stroke="#ead9cb" strokeWidth="1.200" /><path d="M3 4l2 1M9 5l2 1M5 10l1-2M11 12l1-1" stroke="#6b4a35" strokeWidth="1.200" /></svg>
            </button>
        );
    }
    return <button aria-label={value} className={base} style={{ background: value }} />;
}

function SwatchGroup({ colors }) {
    return (
        <div className="mb-px flex w-max gap-px border-t border-b border-[#6a6a6a]">
            <svg viewBox="0 0 13 13" className="h-[13px] w-[13px]"><path d="M1 3h4l1 1.500h6.500V11H1z" fill="#b5b5b5" stroke="#777" strokeWidth=".6" /></svg>
            {colors.map(c => <Swatch key={c} value={c} />)}
        </div>
    );
}

function SwatchesPanel() {
    return (
        <section className="absolute top-[78px] right-10 w-[241px] border border-t-4 border-[#262626] bg-[#535353] shadow-[0_0_4px_rgba(0,0,0,0.4)]">
            <div className="flex h-[18px] bg-linear-to-b from-[#444] to-[#3a3a3a] text-[10px] leading-[17px] font-semibold text-[#9c9c9c]">
                <button className="w-[58px] border-r border-[#2d2d2d] bg-[#535353] text-[#e6e6e6]">Swatches</button>
                <button className="w-[50px] border-r border-b border-[#2d2d2d]">Brushes</button>
                <button className="w-[55px] border-r border-b border-[#2d2d2d]">Symbols</button>
                <div className="flex flex-1 items-center justify-end gap-1 border-b border-[#2d2d2d] pr-[3px]">
                    <svg viewBox="0 0 10 8" className="h-2 w-2.5"><path d="M0 0l4.500 4L0 8zM5.500 0L10 4 5.500 8z" fill="#ccc" /></svg>
                    <Sep size="h-3" className="ml-0.5" />
                    <PanelMenuIcon />
                </div>
            </div>
            <div className="mx-[5px] mt-[5px] flex h-[345px] border border-[#303030]">
                <div className="flex-1">
                    <div className="mb-px">
                        {swatchRows.map((row, i) => (
                            <div key={i} className="mb-px flex gap-px">{row.map(c => <Swatch key={c} value={c} />)}</div>
                        ))}
                    </div>
                    <SwatchGroup colors={grays} />
                    <SwatchGroup colors={brights} />
                </div>
                <div className="flex w-[13px] flex-col items-center justify-between bg-[#3d3d3d] py-[3px]">
                    <Arrow dir="up" className="text-[#8a8a8a]" />
                    <Arrow className="text-[#8a8a8a]" />
                </div>
            </div>
            <div className="flex h-[18px] items-center pr-1 pl-[9px]">
                <button aria-label="Swatch libraries" className="flex items-end"><svg viewBox="0 0 14 12" className="h-3 w-3.5" stroke="#ccc" strokeWidth="1.800"><path d="M1.500 2v9M5 1v10M8 2l4 9" /></svg><Arrow className="-ml-0.5 scale-60 text-[#ccc]" /></button>
                <button aria-label="Show swatch kinds" className="ml-auto flex items-end"><svg viewBox="0 0 12 12" className="h-3 w-3"><path d="M.5.5h11v11H.5zM4 0v12M8 0v12M0 4h12M0 8h12" fill="#777" stroke="#ddd" /></svg><Arrow className="scale-60 text-[#ccc]" /></button>
                <button aria-label="Swatch options" className="ml-2"><svg viewBox="0 0 12 12" className="h-3 w-3" fill="none" stroke="#777"><path d="M1 1h10v10H1zM3 4h1M5 4h4M3 6h1M5 6h4M3 8.500h1M5 8.500h4" /></svg></button>
                <button aria-label="New color group" className="ml-4"><svg viewBox="0 0 12 12" className="h-3 w-3"><path d="M0 2h5l1 1.500h6V11H0z" fill="#c4c4c4" /></svg></button>
                <button aria-label="New swatch" className="ml-3.5"><svg viewBox="0 0 12 12" className="h-3 w-3"><path d="M1 1h10.500v10.500H7V6H1z" fill="#c4c4c4" /><path d="M1 7.500h4.500V12z" fill="#ddd" /></svg></button>
                <button aria-label="Delete swatch" className="ml-3.5"><svg viewBox="0 0 12 12" className="h-3 w-3" fill="none" stroke="#777"><path d="M1 3h10M4 2.500V1h4v1.500M2 4l.5 7.500h7L10 4M4.500 5v5M6 5v5M8 5v5" /></svg></button>
                <svg viewBox="0 0 10 10" className="mt-1 ml-3 h-2.5 w-2.5" stroke="#808080" strokeDasharray="1 1"><path d="M0 9.500h10M3 7.500h7M5 5.500h5M7 3.500h3M9 1.500h1" /></svg>
            </div>
            <div className="flex h-[8px] items-center border-t border-[#333]"><Grip /></div>
        </section>
    );
}

/* ---------- preferences dialog ---------- */

function U({ children }) {
    return <span className="underline decoration-1 underline-offset-[3px]">{children}</span>;
}

function Radio({ name, checked, children }) {
    return (
        <label className="flex h-6 items-center gap-[5px]">
            <input type="radio" name={name} defaultChecked={checked} className="h-3 w-3 appearance-none rounded-full border border-[#3a3a3a] bg-[#616161] checked:bg-[radial-gradient(circle,#e6e6e6_1px,#616161_3px)]" />
            <span className="leading-[14px]">{children}</span>
        </label>
    );
}

function Check({ checked, children }) {
    return (
        <label className="flex h-[30px] items-center gap-[5px]">
            <span className="relative flex">
                <input type="checkbox" defaultChecked={checked} className="peer h-3 w-3 appearance-none border border-[#2f2f2f] bg-[#666]" />
                <svg viewBox="0 0 14 12" className="pointer-events-none absolute -top-px left-0 hidden h-3 w-3.5 peer-checked:block"><path d="M2.500 5.500l3 4L12 1" fill="none" stroke="#f0f0f0" strokeWidth="1.800" /></svg>
            </span>
            <span className="leading-[14px]">{children}</span>
        </label>
    );
}

function BrightnessSlider() {
    const [value, setValue] = useState(50);
    return (
        <div className="mt-4 ml-[84px] flex items-start gap-3">
            <div className="relative w-[238px] shrink-0">
                <div className="flex h-1.5 justify-between px-1">
                    {[0, 1, 2, 3].map(i => <span key={i} className="w-px bg-[#2c2c2c]" />)}
                </div>
                <div className="mt-0.5 h-1 border border-[#2c2c2c] bg-[#3a3a3a]" />
                <svg viewBox="0 0 11 13" className="absolute top-0.5 h-[13px] w-[11px] -translate-x-1" style={{ left: `${value}%` }}>
                    <path d="M1 12.300V5l4.500-4L10 5v7.300z" fill="#6e6e6e" stroke="#dd9440" strokeWidth="1.200" />
                </svg>
                <input type="range" aria-label="Brightness amount" value={value} onChange={e => setValue(Number(e.target.value))} className="absolute inset-x-0 top-0 h-4 opacity-0" />
                <div className="mt-1.5 flex justify-between text-[10px] leading-[15px]"><span>Dark</span><span>Light</span></div>
            </div>
            <input aria-label="Brightness percent" value={value + '%'} readOnly className="h-5 w-11 border border-[#333] bg-[#999] px-1 text-[12px] text-[#0c0c0c]" />
        </div>
    );
}

function Rule({ className }) {
    return <div className={clsx('h-0.5 border-t border-b border-t-[#3c3c3c] border-b-[#606060]', className)} />;
}

function PreferencesDialog() {
    const [section, setSection] = useState('User Interface');
    return (
        <div className="pointer-events-none absolute inset-x-0 top-[266px] flex justify-center pr-px">
            <div role="dialog" aria-label="Preferences" className="pointer-events-auto w-[715px] border border-[#5a8fa8] bg-[#535353] text-[12px] text-[#e0e0e0] shadow-[0_6px_22px_rgba(0,0,0,0.5)]">
                <h1 className="bg-white px-[3px] pt-0.5 text-[16px] leading-[34px] text-black">Preferences</h1>
                <div className="flex px-4 pt-[23px]">
                    <ul className="h-[345px] w-40 shrink-0 border border-[#303030]">
                        {sections.map(s => (
                            <li key={s}>
                                <button onClick={() => setSection(s)} className={clsx('h-5 w-full px-[5px] text-left leading-5 whitespace-nowrap', s === section && 'bg-[#616b7d]')}>{s}</button>
                            </li>
                        ))}
                    </ul>
                    <div className="ml-[22px] w-[485px]">
                        <h2 className="mb-0.5 leading-[13px]">User Interface</h2>
                        <Rule />
                        <div className="mt-[15px] flex items-center gap-1">
                            <label htmlFor="brightness" className="w-20 text-right leading-[14px]"><U>B</U>rightness:</label>
                            <div className="relative h-5 w-[133px]">
                                <select id="brightness" className="block h-5 w-full appearance-none border border-[#2f2f2f] bg-linear-to-b from-[#727272] to-[#5c5c5c] pl-[7px] text-[12px] leading-4 text-[#e6e6e6]">
                                    <option>Custom</option>
                                    <option>Dark</option>
                                    <option>Medium Dark</option>
                                    <option>Medium Light</option>
                                    <option>Light</option>
                                </select>
                                <span className="pointer-events-none absolute inset-y-0 right-[5px] flex items-center gap-[4px]"><Sep size="h-3" /><Arrow /></span>
                            </div>
                        </div>
                        <BrightnessSlider />
                        <fieldset className="mt-[9px] flex gap-1">
                            <span className="w-20 text-right leading-6">Canvas Color:</span>
                            <div>
                                <Radio name="canvas" checked><U>M</U>atch User Interface Brightness</Radio>
                                <Radio name="canvas"><U>W</U>hite</Radio>
                            </div>
                        </fieldset>
                        <div className="mt-0.5">
                            <Check><U>A</U>uto-Collapse Iconic Panels</Check>
                            <Check checked><U>O</U>pen Documents As Tabs</Check>
                        </div>
                        <Rule className="mt-2" />
                        <fieldset className="mt-[10px] flex gap-1">
                            <span className="w-20 text-right leading-6 whitespace-nowrap">Scroll Buttons:</span>
                            <div>
                                <Radio name="scroll" checked>At Two <U>E</U>nds</Radio>
                                <Radio name="scroll"><U>T</U>ogether</Radio>
                            </div>
                        </fieldset>
                    </div>
                </div>
                <div className="mt-[23px] mb-[30px] flex items-center justify-end gap-1.5 px-4">
                    <button className="h-[26px] w-[92px] border-2 border-[#2c2c2c] bg-linear-to-b from-[#707070] to-[#5c5c5c]">OK</button>
                    <button className="h-6 w-[90px] border border-[#2f2f2f] bg-linear-to-b from-[#707070] to-[#5c5c5c]">Cancel</button>
                </div>
            </div>
        </div>
    );
}

/* ---------- windows task bar ---------- */

const apps = [
    ['File Explorer', true, <svg viewBox="0 0 34 30" className="h-[30px] w-[34px]"><path d="M1 2h13l2 3h16v23H1z" fill="#f8d775" /><path d="M1 2h13l2 3H3v2H1z" fill="#f2b72b" /><path d="M1 7h32v21H1z" fill="#fde59a" /><path d="M7 28V17q0-2 2-2h16q2 0 2 2v11h-5v-6h-10v6z" fill="#3fb1e5" /></svg>],
    ['FileZilla', true, <svg viewBox="0 0 36 36" className="h-9 w-9"><path d="M1 1h34v34H1z" fill="#b30000" stroke="#7d0000" strokeWidth="2" strokeDasharray="2 2" /><path d="M9 6h13l-1 4h-8l-1 5h7l-1 4h-7l-2 9H6zM17 17h13l-1 3-8 9h7l-1 4H14l1-4 8-8h-7z" fill="#fff" /></svg>],
    ['Google Chrome', true, <svg viewBox="0 0 34 34" className="h-[34px] w-[34px]"><circle cx="17" cy="17" r="16" fill="#fbc934" /><path d="M3.100 9a16 16 0 0 1 27.800 0H17l-7 12z" fill="#dd4b3e" /><path d="M3.100 9L10 21l7 4-4 7.500A16 16 0 0 1 3.100 9z" fill="#1da462" /><circle cx="17" cy="17" r="8" fill="#fff" /><circle cx="17" cy="17" r="6.200" fill="#4a8af4" /></svg>],
    ['Sublime Text', true, <svg viewBox="0 0 34 32" className="h-8 w-[34px]"><path d="M4 2h26l4 21v6q0 1-1 1H1q-1 0-1-1v-6z" fill="#e0e0e0" /><path d="M4 2h26l3 21H1z" fill="#4d4d4d" /><path d="M2 25h30v3H2z" fill="#333" /><text x="17" y="19" textAnchor="middle" fontSize="18" fontWeight="700" fill="#f39a25" fontFamily="Open Sans">S</text></svg>],
    ['XAMPP', false, <svg viewBox="0 0 36 36" className="h-9 w-9"><rect width="36" height="36" rx="4" fill="#f47a1f" /><path d="M3 4q0-2 2-2h26q2 0 2 2v2H3z" fill="#fba766" /><path d="M10 10q-4 0-4 4 0 3 3 4-3 1-3 5 0 4 4 4 3 0 5-3h6q2 3 5 3 4 0 4-4t-3-5q3-1 3-4 0-4-4-4-3 0-5 3h-6q-2-3-5-3z" fill="none" stroke="#fff" strokeWidth="4" /><path d="M14 14l8 9M22 14l-8 9" stroke="#fff" strokeWidth="3" /></svg>],
    ['Sticky Notes', true, <svg viewBox="0 0 28 28" className="h-7 w-7"><path d="M0 0h28v17L17 28H0z" fill="#f1e793" /><path d="M28 17H17v11z" fill="#8d874f" /></svg>],
    ['Notepad', true, <svg viewBox="0 0 34 34" className="h-[34px] w-[34px]"><path d="M26 5l5 2-2 22-4 2z" fill="#9a8049" /><path d="M11 3l18 2-1 27-26-6z" fill="#9fd0db" /><path d="M11 3l12 1-8 24-13-2z" fill="#4fa3b8" /><path d="M20 20l8-9v20l-12-2z" fill="#e2f1f4" /><path d="M11 3h18" stroke="#ccc" strokeWidth="2.500" strokeDasharray="1.500 1.500" /></svg>],
];

function TaskBar() {
    return (
        <footer className="relative flex h-[60px] bg-[linear-gradient(90deg,#070707_0_588px,#101010_588px_660px,#191919_660px_750px,#28261e_750px_1190px,#111_1190px)] text-[#e8e8e8]">
            <button aria-label="Start" className="flex w-[72px] shrink-0 items-center justify-center">
                <svg viewBox="0 0 24 24" className="h-6 w-6"><path d="M0 3.500l10-1.400v9.300H0zM11.200 2L24 0v11.400H11.200zM0 12.600h10v9.300L0 20.500zM11.200 12.600H24V24l-12.800-2z" fill="#fff" /></svg>
            </button>
            <label className="flex w-[516px] shrink-0 items-center bg-[#333] pr-[22px] pl-[13px]">
                <svg viewBox="0 0 34 34" className="h-[34px] w-[34px] shrink-0" fill="none"><circle cx="17" cy="17" r="15.500" stroke="#a8a8a8" strokeWidth="3" /><circle cx="17" cy="17" r="13.500" stroke="#fff" strokeWidth="3" /></svg>
                <input type="text" placeholder="Type here to search" className="ml-[13px] min-w-0 flex-1 bg-transparent pt-[3px] text-[20px] text-white outline-none placeholder:text-[#a8a8a8]" />
                <svg viewBox="0 0 18 26" className="h-[26px] w-[18px] shrink-0" fill="none" stroke="#a8a8a8" strokeWidth="1.500"><rect x="5" y="1" width="8" height="17" rx="2" /><path d="M1.500 13v4q0 4 4 4h7q4 0 4-4v-4M9 21v3.500M5 24.500h8" /></svg>
            </label>
            <button aria-label="Task View" className="flex w-[72px] shrink-0 items-center justify-center">
                <svg viewBox="0 0 30 22" className="h-[22px] w-[30px]" fill="none" stroke="#f0f0f0" strokeWidth="1.300"><path d="M6.500 1h17v20h-17zM4 4H1v14h3M26 4h3v14h-3" /></svg>
            </button>
            <div className="ml-[3px] flex">
                {apps.map(([name, open, icon]) => (
                    <button key={name} aria-label={name} className="relative flex w-[75px] items-center justify-center">
                        {icon}
                        {open && <span className="absolute inset-x-[7px] bottom-0 h-[3px] bg-[#a9d9f5]" />}
                    </button>
                ))}
                <button aria-label="Adobe Illustrator" className="relative ml-0.5 flex w-[73px] items-center justify-center bg-[linear-gradient(90deg,#54554b_0_40px,#3f3f3f_40px)]">
                    <span className="flex h-8 w-[34px] items-center justify-center border-2 border-[#f0a22e] bg-[#261703] text-[17px] font-semibold text-[#f7a12c]">Ai</span>
                    <span className="absolute inset-x-0 bottom-0 h-[3px] bg-[#a9d9f5]" />
                </button>
            </div>
            <div className="relative mr-3 ml-auto flex w-[480px] items-center bg-[#28251e]">
                <span className="absolute top-0 left-[17px] text-[20px] leading-[30px] whitespace-nowrap text-[#0b0a08]">Order","New Order");</span>
                <button aria-label="Show hidden icons" className="relative ml-[127px]"><svg viewBox="0 0 18 10" className="h-2.5 w-[18px]" fill="none" stroke="#f0f0f0" strokeWidth="1.500"><path d="M1 9.500l8-8.500 8 8.500" /></svg></button>
                <button aria-label="Battery" className="relative ml-[15px]"><svg viewBox="0 0 24 18" className="h-[18px] w-6" fill="none" stroke="#fff" strokeWidth="1.300"><path d="M8 4.500h13.500v11h-16V12M22.500 8v4" /><path d="M8 6.500h12v7H8z" fill="#fff" stroke="none" /><path d="M2 1v3M6 1v3M1 4h6v3.500q0 2-3 2t-3-2zM4 10v5h2" /></svg></button>
                <button aria-label="OneDrive" className="relative ml-[11px]"><svg viewBox="0 0 26 22" className="h-[22px] w-[26px]"><path d="M4 15q-4-1-3-4.500 1-2 3-2 0-5 5-5 1.500-3 5.500-2 3 1 3 4l-3 7-2 4z" fill="#fff" /><path d="M6 16q-2-5 3-6 2-4 6-3" fill="none" stroke="#28251e" /><circle cx="18" cy="14.500" r="7" fill="#e0202f" /><path d="M15.500 12l5 5M20.500 12l-5 5" stroke="#fff" strokeWidth="1.500" /></svg></button>
                <button aria-label="Wi-Fi" className="relative ml-[14px]"><svg viewBox="0 0 19 20" className="h-5 w-[19px]" fill="none" stroke="#e8e8e8" strokeWidth="1.300"><path d="M1 19C2 9 9 2 18 1" stroke="#aaa" /><path d="M5 19C5.500 12 11 6 18 5.500M9 19c.5-4 4-8.500 9-9M13 19c.5-2 2-4.500 5-5" /><circle cx="17" cy="18" r="1.500" fill="#fff" stroke="none" /></svg></button>
                <button aria-label="Volume" className="relative ml-[14px]"><svg viewBox="0 0 24 20" className="h-5 w-6" fill="none" stroke="#f0f0f0" strokeWidth="1.300"><path d="M1 6.500h3.500L9 1.500v17l-4.500-5H1z" /><path d="M12 8q1.500 2 0 4" /><path d="M15 5.500q4 4.500 0 9" stroke="#999" /><path d="M18.500 3q6 7 0 14" stroke="#777" /></svg></button>
                <div className="ml-[14px] flex h-full w-[97px] flex-col items-center justify-center text-[17px] leading-7">
                    <span>16:42</span>
                    <span>09/09/2017</span>
                </div>
                <button aria-label="Notifications" className="relative ml-[26px]">
                    <svg viewBox="0 0 24 22" className="h-[22px] w-6"><path d="M0 0h24v18H12l-4 4v-4H0z" fill="#fff" /><path d="M5 5h14M5 9h14M5 13h14" stroke="#333" strokeWidth="1.200" /></svg>
                    <span className="absolute top-[9px] left-[10px] flex h-[27px] w-[27px] items-center justify-center rounded-full border border-[#aaa] bg-[#28251e] text-[14px] font-semibold text-white">12</span>
                </button>
            </div>
            <span className="absolute right-[7px] h-full w-px bg-[#777]" />
        </footer>
    );
}

export default function App() {
    return (
        <div className="relative flex min-h-screen flex-col overflow-hidden bg-[#535353] font-['Open_Sans','Noto_Sans',sans-serif]">
            <MenuBar />
            <ControlBar />
            <div className="relative flex flex-1">
                <ToolBar />
                <DocumentArea />
                <Dock />
                <SwatchesPanel />
            </div>
            <PreferencesDialog />
            <TaskBar />
        </div>
    );
}
